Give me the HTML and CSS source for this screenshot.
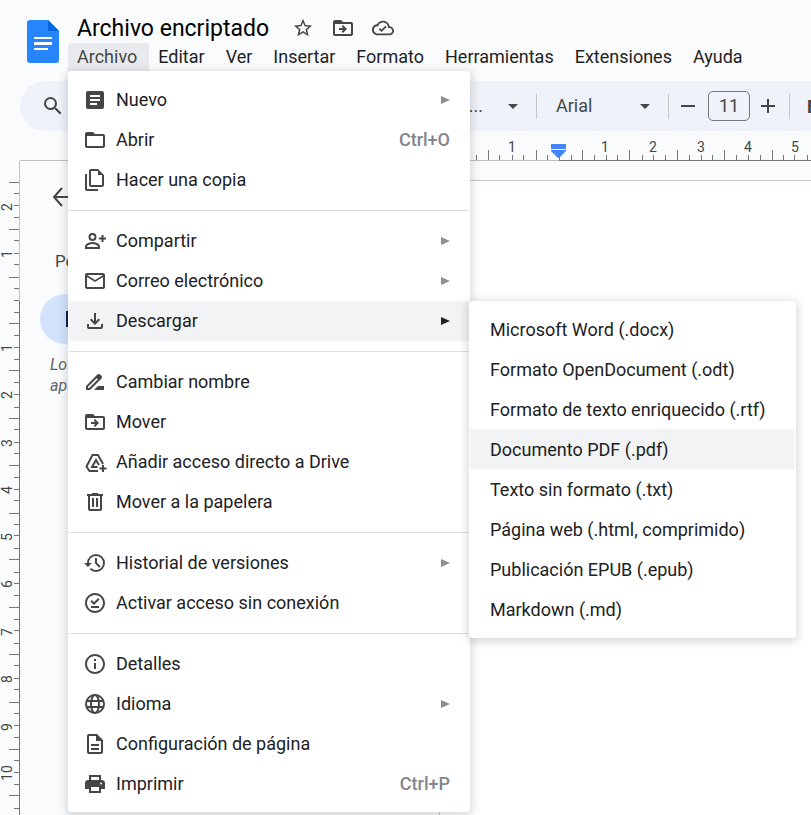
FILE: index.html
```html
<!DOCTYPE html>
<html lang="es">
<head>
<meta charset="utf-8">
<meta name="viewport" content="width=device-width, initial-scale=1">
<title>Archivo encriptado</title>
<link rel="stylesheet" href="styles.css">
</head>
<body>
<svg class="sprite" aria-hidden="true">
  <symbol id="folder-move" viewBox="0 0 24 24"><path d="M20 6h-8l-2-2H4c-1.1 0-2 .9-2 2v12c0 1.1.9 2 2 2h16c1.1 0 2-.9 2-2V8c0-1.1-.9-2-2-2zm0 12H4V8h16v10zM8 12h4.2l-1.6-1.6L12 9l4 4-4 4-1.4-1.4 1.6-1.6H8z"/></symbol>
  <symbol id="submenu" viewBox="0 0 9 8"><path d="M0 0l9 4-9 4z"/></symbol>
  <symbol id="caret" viewBox="0 0 10 5"><path d="M0 0h10L5 5z"/></symbol>
</svg>

<header class="header">
  <a class="logo" href="#" aria-label="Documentos">
    <svg width="32" height="43" viewBox="0 0 32 43"><path d="M3 0h18l11 11v29a3 3 0 0 1-3 3H3a3 3 0 0 1-3-3V3a3 3 0 0 1 3-3z" fill="#2684fc"/><path d="M21 0l11 11H21z" fill="#0066da"/><path d="M7 17h18v2H7zM7 22h18v3H7zM7 28h14v2H7z" fill="#fff"/></svg>
  </a>
  <div class="heading">
    <div class="title-row">
      <h1 class="title">Archivo encriptado</h1>
      <button class="icon-button" aria-label="Destacar"><svg width="22" height="22" viewBox="0 0 24 24"><path d="M22 9.24l-7.19-.62L12 2 9.19 8.63 2 9.24l5.46 4.73L5.82 21 12 17.27 18.18 21l-1.63-7.03L22 9.24zM12 15.4l-3.76 2.27 1-4.28-3.32-2.88 4.38-.38L12 6.1l1.71 4.04 4.38.38-3.32 2.88 1 4.28L12 15.4z"/></svg></button>
      <button class="icon-button" aria-label="Mover"><svg width="24" height="24"><use href="#folder-move"/></svg></button>
      <button class="icon-button" aria-label="Estado del documento"><svg width="22" height="22" viewBox="0 0 24 24"><path d="M19.35 10.04C18.67 6.59 15.64 4 12 4 9.11 4 6.6 5.64 5.35 8.04 2.34 8.36 0 10.91 0 14c0 3.31 2.69 6 6 6h13c2.76 0 5-2.24 5-5 0-2.64-2.05-4.78-4.65-4.96zM19 18H6c-2.21 0-4-1.79-4-4s1.79-4 4-4h.71C7.37 7.69 9.48 6 12 6c3.04 0 5.5 2.46 5.5 5.5v.5H19c1.66 0 3 1.34 3 3s-1.34 3-3 3zm-8.5-1.6l-3.1-3.1 1.4-1.4 1.7 1.7 4.1-4.1 1.4 1.4z"/></svg></button>
    </div>
    <nav class="menubar">
      <div class="menubar-entry">
        <button class="menubar-item open">Archivo</button>
        <ul class="menu">
          <li><button class="item"><svg viewBox="0 0 24 24"><path d="M19 3H5c-1.1 0-2 .9-2 2v14c0 1.1.9 2 2 2h14c1.1 0 2-.9 2-2V5c0-1.1-.9-2-2-2zm-5 14H7v-2h7v2zm3-4H7v-2h10v2zm0-4H7V7h10v2z"/></svg><span>Nuevo</span><svg class="arrow"><use href="#submenu"/></svg></button></li>
          <li><button class="item"><svg viewBox="0 0 24 24"><path d="M20 6h-8l-2-2H4c-1.1 0-2 .9-2 2v12c0 1.1.9 2 2 2h16c1.1 0 2-.9 2-2V8c0-1.1-.9-2-2-2zm0 12H4V8h16v10z"/></svg><span>Abrir</span><kbd>Ctrl+O</kbd></button></li>
          <li><button class="item"><svg viewBox="0 0 24 24"><path d="M15 1H8C6.900 1 6 1.900 6 3v14c0 1.100.900 2 2 2h11c1.100 0 2-.9 2-2V7l-6-6zM8 17V3h7v4h4v10H8zM2 6h2v15h11v2H4c-1.100 0-2-.9-2-2V6z"/></svg><span>Hacer una copia</span></button></li>
          <li class="divider" role="separator"></li>
          <li><button class="item"><svg class="line" viewBox="0 0 24 24"><circle cx="9.500" cy="8" r="3"/><path d="M3 19v-1.500c0-2 4-3.500 6.500-3.500s6.500 1.500 6.500 3.500V19zM19.500 6v7M16 9.500h7"/></svg><span>Compartir</span><svg class="arrow"><use href="#submenu"/></svg></button></li>
          <li><button class="item"><svg viewBox="0 0 24 24"><path d="M22 6c0-1.100-.9-2-2-2H4c-1.100 0-2 .9-2 2v12c0 1.100.9 2 2 2h16c1.100 0 2-.9 2-2V6zm-2 0l-8 5-8-5h16zm0 12H4V8l8 5 8-5v10z"/></svg><span>Correo electrónico</span><svg class="arrow"><use href="#submenu"/></svg></button></li>
          <li class="has-submenu">
            <button class="item active"><svg viewBox="0 0 24 24"><path d="M12 16l-5-5 1.400-1.450 2.600 2.600V4h2v8.150l2.600-2.600L17 11l-5 5zm-6 4q-.825 0-1.412-.588T4 18v-3h2v3h12v-3h2v3q0 .825-.588 1.412T18 20H6z"/></svg><span>Descargar</span><svg class="arrow"><use href="#submenu"/></svg></button>
            <ul class="menu submenu">
              <li><button class="item">Microsoft Word (.docx)</button></li>
              <li><button class="item">Formato OpenDocument (.odt)</button></li>
              <li><button class="item">Formato de texto enriquecido (.rtf)</button></li>
              <li><button class="item active">Documento PDF (.pdf)</button></li>
              <li><button class="item">Texto sin formato (.txt)</button></li>
              <li><button class="item">Página web (.html, comprimido)</button></li>
              <li><button class="item">Publicación EPUB (.epub)</button></li>
              <li><button class="item">Markdown (.md)</button></li>
            </ul>
          </li>
          <li class="divider" role="separator"></li>
          <li><button class="item"><svg viewBox="0 0 24 24"><path d="M18.410 5.800L17.200 4.590c-.78-.78-2.050-.78-2.830 0l-2.680 2.680L3 15.960V20h4.040l8.740-8.740 2.630-2.630c.79-.78.79-2.050 0-2.830zM6.210 18H5v-1.210l8.660-8.660 1.210 1.210L6.210 18zM11 20l4-4h6v4H11z"/></svg><span>Cambiar nombre</span></button></li>
          <li><button class="item"><svg><use href="#folder-move"/></svg><span>Mover</span></button></li>
          <li><button class="item"><svg class="line" viewBox="0 0 24 24"><path d="M15 21H6.500L3.500 16.500 9.500 5h5.500l5 9M14.500 17H9l4-7 3 5M20 15v7M16.500 18.500h7"/></svg><span>Añadir acceso directo a Drive</span></button></li>
          <li><button class="item"><svg viewBox="0 0 24 24"><path d="M7 21c-1.100 0-2-.9-2-2V6H4V4h5V3h6v1h5v2h-1v13c0 1.100-.9 2-2 2H7zM17 6H7v13h10V6zM9 17h2V8H9v9zm4 0h2V8h-2v9z"/></svg><span>Mover a la papelera</span></button></li>
          <li class="divider" role="separator"></li>
          <li><button class="item"><svg viewBox="0 0 24 24"><path d="M13 3a9 9 0 0 0-9 9H1l3.890 3.890.07.14L9 12H6c0-3.870 3.130-7 7-7s7 3.130 7 7-3.130 7-7 7c-1.930 0-3.680-.79-4.940-2.060l-1.420 1.420A8.954 8.954 0 0 0 13 21a9 9 0 0 0 0-18zm-1 4v5.500l4.200 4.200 1.400-1.400-3.600-3.600V7z"/></svg><span>Historial de versiones</span><svg class="arrow"><use href="#submenu"/></svg></button></li>
          <li><button class="item"><svg viewBox="0 0 24 24"><path d="M12 2C6.500 2 2 6.500 2 12s4.500 10 10 10 10-4.500 10-10S17.500 2 12 2zm0 18c-4.420 0-8-3.580-8-8s3.580-8 8-8 8 3.580 8 8-3.580 8-8 8zM8 15h8v2H8zM11 14l-3.500-3.500 1.400-1.400 2.100 2.100 4.200-4.200 1.400 1.400z"/></svg><span>Activar acceso sin conexión</span></button></li>
          <li class="divider" role="separator"></li>
          <li><button class="item"><svg viewBox="0 0 24 24"><path d="M12 2C6.500 2 2 6.500 2 12s4.500 10 10 10 10-4.500 10-10S17.500 2 12 2zm0 18c-4.420 0-8-3.580-8-8s3.580-8 8-8 8 3.580 8 8-3.580 8-8 8zM11 7h2v2h-2zM11 11h2v6h-2z"/></svg><span>Detalles</span></button></li>
          <li><button class="item"><svg class="line" viewBox="0 0 24 24"><circle cx="12" cy="12" r="9"/><ellipse cx="12" cy="12" rx="4" ry="9"/><path d="M3.500 9h17M3.500 15h17"/></svg><span>Idioma</span><svg class="arrow"><use href="#submenu"/></svg></button></li>
          <li><button class="item"><svg viewBox="0 0 24 24"><path d="M8 16h8v2H8zm0-4h8v2H8zm6-10H6c-1.100 0-2 .9-2 2v16c0 1.100.9 2 2 2h12c1.100 0 2-.9 2-2V8l-6-6zm4 18H6V4h7v5h5v11z"/></svg><span>Configuración de página</span></button></li>
          <li><button class="item"><svg viewBox="0 0 24 24"><path fill-rule="evenodd" d="M19 8h-1V3H6v5H5c-1.660 0-3 1.340-3 3v6h4v4h12v-4h4v-6c0-1.660-1.340-3-3-3zM8 5h8v3H8V5zm8 14H8v-4h8v4zm2-8.500a1 1 0 1 1 0 2 1 1 0 0 1 0-2z"/></svg><span>Imprimir</span><kbd>Ctrl+P</kbd></button></li>
        </ul>
      </div>
      <button class="menubar-item">Editar</button>
      <button class="menubar-item">Ver</button>
      <button class="menubar-item">Insertar</button>
      <button class="menubar-item">Formato</button>
      <button class="menubar-item">Herramientas</button>
      <button class="menubar-item">Extensiones</button>
      <button class="menubar-item">Ayuda</button>
    </nav>
  </div>
</header>

<div class="toolbar" role="toolbar">
  <button class="tool search" aria-label="Buscar en los menús"><svg width="24" height="24" viewBox="0 0 24 24"><path d="M15.500 14h-.79l-.28-.27A6.470 6.470 0 0 0 16 9.500 6.500 6.500 0 1 0 9.500 16c1.610 0 3.090-.59 4.230-1.570l.27.28v.79l5 4.990L20.490 19l-4.990-5zm-6 0C7.010 14 5 11.990 5 9.500S7.010 5 9.500 5 14 7.010 14 9.500 11.990 14 9.500 14z"/></svg></button>
  <label class="picker picker-style"><select aria-label="Estilos"><option>Texto n...</option></select><svg width="10" height="5"><use href="#caret"/></svg></label>
  <span class="separator"></span>
  <label class="picker picker-font"><select aria-label="Fuente"><option>Arial</option></select><svg width="10" height="5"><use href="#caret"/></svg></label>
  <span class="separator"></span>
  <button class="tool" aria-label="Reducir tamaño de fuente"><svg width="14" height="14" viewBox="0 0 14 14"><path d="M0 6h14v2H0z"/></svg></button>
  <input class="font-size" type="text" value="11" aria-label="Tamaño de fuente">
  <button class="tool" aria-label="Aumentar tamaño de fuente"><svg width="14" height="14" viewBox="0 0 14 14"><path d="M6 0h2v6h6v2H8v6H6V8H0V6h6z"/></svg></button>
  <span class="separator"></span>
  <button class="tool bold" aria-label="Negrita">B</button>
</div>

<svg class="ruler-x" aria-hidden="true">
  <path class="faint" d="M0 29h119v1H0z"/>
  <path class="dark" d="M119 29h2000v1H119z"/>
  <path class="tick" d="M36.500 24v5M48.500 19v10M59.500 24v5M72.500 24v5M83.500 24v5M96.500 19v10M107.500 24v5M119.500 24v5M131.500 24v5M142.500 19v10M154.500 24v5M166.500 24v5M177.500 24v5M189.500 19v10M202.500 24v5M213.500 24v5M225.500 24v5M237.500 19v10M249.500 24v5M261.500 24v5M272.500 24v5M284.500 19v10M296.500 24v5M308.500 24v5M320.500 24v5M332.500 19v10M343.500 24v5M354.500 24v5M367.500 24v5"/>
  <path fill="#4285f4" d="M111 13h15v5h-15zM111 19h15v1l-7 7h-1l-7-7z"/>
  <g><text x="72" y="21">1</text><text x="165" y="21">1</text><text x="213" y="21">2</text><text x="261" y="21">3</text><text x="308" y="21">4</text><text x="355" y="21">5</text></g>
</svg>

<main class="workspace">
  <svg class="ruler-y" aria-hidden="true">
    <path class="faint" d="M19 0h1v140h-1z"/>
    <path class="dark" d="M19 140h1v2000h-1z"/>
    <path class="tick" d="M9 21.500h10M14 32.500h5M14 44.500h5M14 56.500h5M9 68.500h10M14 79.500h5M14 92.500h5M14 103.500h5M9 116.500h10M14 127.500h5M14 139.500h5M14 151.500h5M9 162.500h10M14 174.500h5M14 186.500h5M14 198.500h5M9 209.500h10M14 221.500h5M14 233.500h5M14 246.500h5M9 257.500h10M14 268.500h5M14 281.500h5M14 292.500h5M9 304.500h10M14 316.500h5M14 328.500h5M14 339.500h5M9 352.500h10M14 363.500h5M14 374.500h5M14 387.500h5M9 398.500h10M14 411.500h5M14 422.500h5M14 434.500h5M9 446.500h10M14 458.500h5M14 469.500h5M14 482.500h5M9 493.500h10M14 504.500h5M14 517.500h5M14 528.500h5M9 541.500h10M14 552.500h5M14 564.500h5M14 576.500h5M9 588.500h10M14 599.500h5M14 611.500h5M14 623.500h5M9 634.500h10M14 647.500h5"/>
    <g transform="rotate(-90)"><text x="-46" y="12">2</text><text x="-93" y="12">1</text><text x="-187" y="12">1</text><text x="-234" y="12">2</text><text x="-282" y="12">3</text><text x="-329" y="12">4</text><text x="-376" y="12">5</text><text x="-423" y="12">6</text><text x="-471" y="12">7</text><text x="-518" y="12">8</text><text x="-566" y="12">9</text><text x="-612" y="12">10</text><text x="-659" y="12">11</text></g>
  </svg>
  <aside class="outline">
    <button class="icon-button back" aria-label="Cerrar"><svg width="24" height="24" viewBox="0 0 24 24"><path fill="none" stroke="#444746" stroke-width="2" d="M12 3l-8 9 8 9M4 12h18"/></svg></button>
    <h2>Pestañas</h2>
    <button class="tab"><svg width="20" height="20" viewBox="0 0 20 20"><path d="M2 2h16v16H2z" fill="#041e49"/></svg></button>
    <p>Los encabezados que añadas al documento<br>aparecerán aquí.</p>
  </aside>
  <article class="page"></article>
</main>
</body>
</html>
```
FILE: styles.css
```css
* { box-sizing: border-box; }

body {
  margin: 0;
  height: 100vh;
  overflow: hidden;
  display: flex;
  flex-direction: column;
  background: #f9fbfd;
  color: #1f1f1f;
  font-family: Roboto, "Liberation Sans", sans-serif;
  font-size: 18px;
}

button, select, input { font: inherit; color: inherit; }

button {
  border: 0;
  padding: 0;
  background: none;
  display: flex;
  align-items: center;
}

svg { display: block; flex: none; fill: #444746; }
.sprite { position: absolute; width: 0; height: 0; }

.header {
  display: flex;
  flex: none;
  height: 81px;
  padding: 13px 0 0 27px;
}
.logo { padding-top: 7px; }
.heading { margin-left: 9px; }

.title-row {
  display: flex;
  align-items: center;
  gap: 17px;
  height: 30px;
  padding-left: 9px;
}
.title {
  margin: 0 6px 0 0;
  color: #000;
  font-size: 23px;
  font-weight: 400;
  white-space: nowrap;
}

.menubar { display: flex; height: 28px; }
.menubar-entry { position: relative; }
.menubar-item {
  height: 28px;
  padding: 0 12px 2px 9px;
  border-radius: 4px 4px 0 0;
}
.menubar-item.open { background: #e8eaed; color: #444746; }

.menu {
  position: absolute;
  z-index: 2;
  top: 100%;
  left: 0;
  width: 402px;
  margin: 0;
  padding: 9px 1px 8px;
  list-style: none;
  background: #fff;
  border-radius: 4px;
  box-shadow: 0 2px 8px 2px rgba(60, 64, 67, .2);
}
.item {
  width: 100%;
  height: 40px;
  padding: 0 19px 0 14px;
  gap: 9px;
  white-space: nowrap;
  color: #202124;
}
.item span, .item kbd { padding-bottom: 2px; }
.item svg { width: 24px; height: 24px; }
.item .line { fill: none; stroke: #444746; stroke-width: 2; }
.item .arrow { width: 9px; height: 8px; margin-left: auto; fill: #8f8f8f; }
.item kbd {
  margin-left: auto;
  font: inherit;
  font-weight: 500;
  color: #80868b;
}
.item.active { background: #f1f3f4; }
.item.active .arrow { fill: #202124; }
.divider { height: 1px; margin: 10px 0; background: #dadce0; }

.has-submenu { position: relative; }
.submenu { top: 0; left: 100%; width: 327px; padding: 8px 1px 9px; }
.submenu .item { padding: 0 20px; }

.toolbar {
  display: flex;
  flex: none;
  align-items: center;
  height: 50px;
  margin-left: 20px;
  padding-left: 21px;
  overflow: hidden;
  border-radius: 25px 0 0 25px;
  background: #eff3f9;
  color: #444746;
}
.tool { flex: none; justify-content: center; }
.search { margin-right: 338px; }
.picker { display: flex; flex: none; align-items: center; }
.picker select {
  flex: 1;
  min-width: 0;
  padding: 0 0 2px;
  border: 0;
  background: none;
  appearance: none;
}
.picker-style { width: 115px; gap: 25px; margin-right: 18px; }
.picker-style select { text-align-last: right; }
.picker-font { width: 94px; margin: 0 18px 0 19px; }
.separator { flex: none; width: 1px; height: 25px; background: #c7c7c7; }
.separator + .tool { margin-left: 12px; }
.font-size {
  flex: none;
  width: 42px;
  height: 30px;
  margin: 0 11px 0 13px;
  padding: 0 0 2px;
  border: 1px solid #747775;
  border-radius: 5px;
  background: none;
  text-align: center;
}
.font-size + .tool { margin-right: 14px; }
.separator + .bold { margin-left: 17px; font-weight: 700; }

.ruler-x { width: calc(100% - 440px); height: 30px; margin-left: 440px; }
.ruler-x text, .ruler-y text {
  fill: #444746;
  font-size: 14px;
  text-anchor: middle;
}
.tick { stroke: #747775; stroke-width: 1; }
.faint { fill: #c0c0c0; }
.dark { fill: #747775; }

.workspace {
  display: grid;
  flex: 1;
  grid-template-columns: 20px 419px 1fr;
  grid-template-rows: 100%;
  min-height: 0;
}
.ruler-y { width: 20px; height: 100%; }
.outline { border-top: 1px solid #c0c0c0; margin-top: -1px; padding-left: 20px; }
.back { margin: 24px 0 0 10px; }
.outline h2 {
  margin: 41px 0 0 15px;
  color: #444746;
  font-size: 17px;
  font-weight: 400;
  line-height: 22px;
}
.tab {
  width: 340px;
  height: 50px;
  margin-top: 22px;
  padding-left: 24px;
  border-radius: 25px;
  background: #d3e3fd;
}
.outline p {
  margin: 10px 0 0 10px;
  color: #5f6368;
  font-size: 16px;
  font-style: italic;
  line-height: 21px;
  white-space: nowrap;
}
.page { margin-top: 19px; border: solid #c7c7c7; border-width: 1px 0 0 1px; background: #fff; }
```
